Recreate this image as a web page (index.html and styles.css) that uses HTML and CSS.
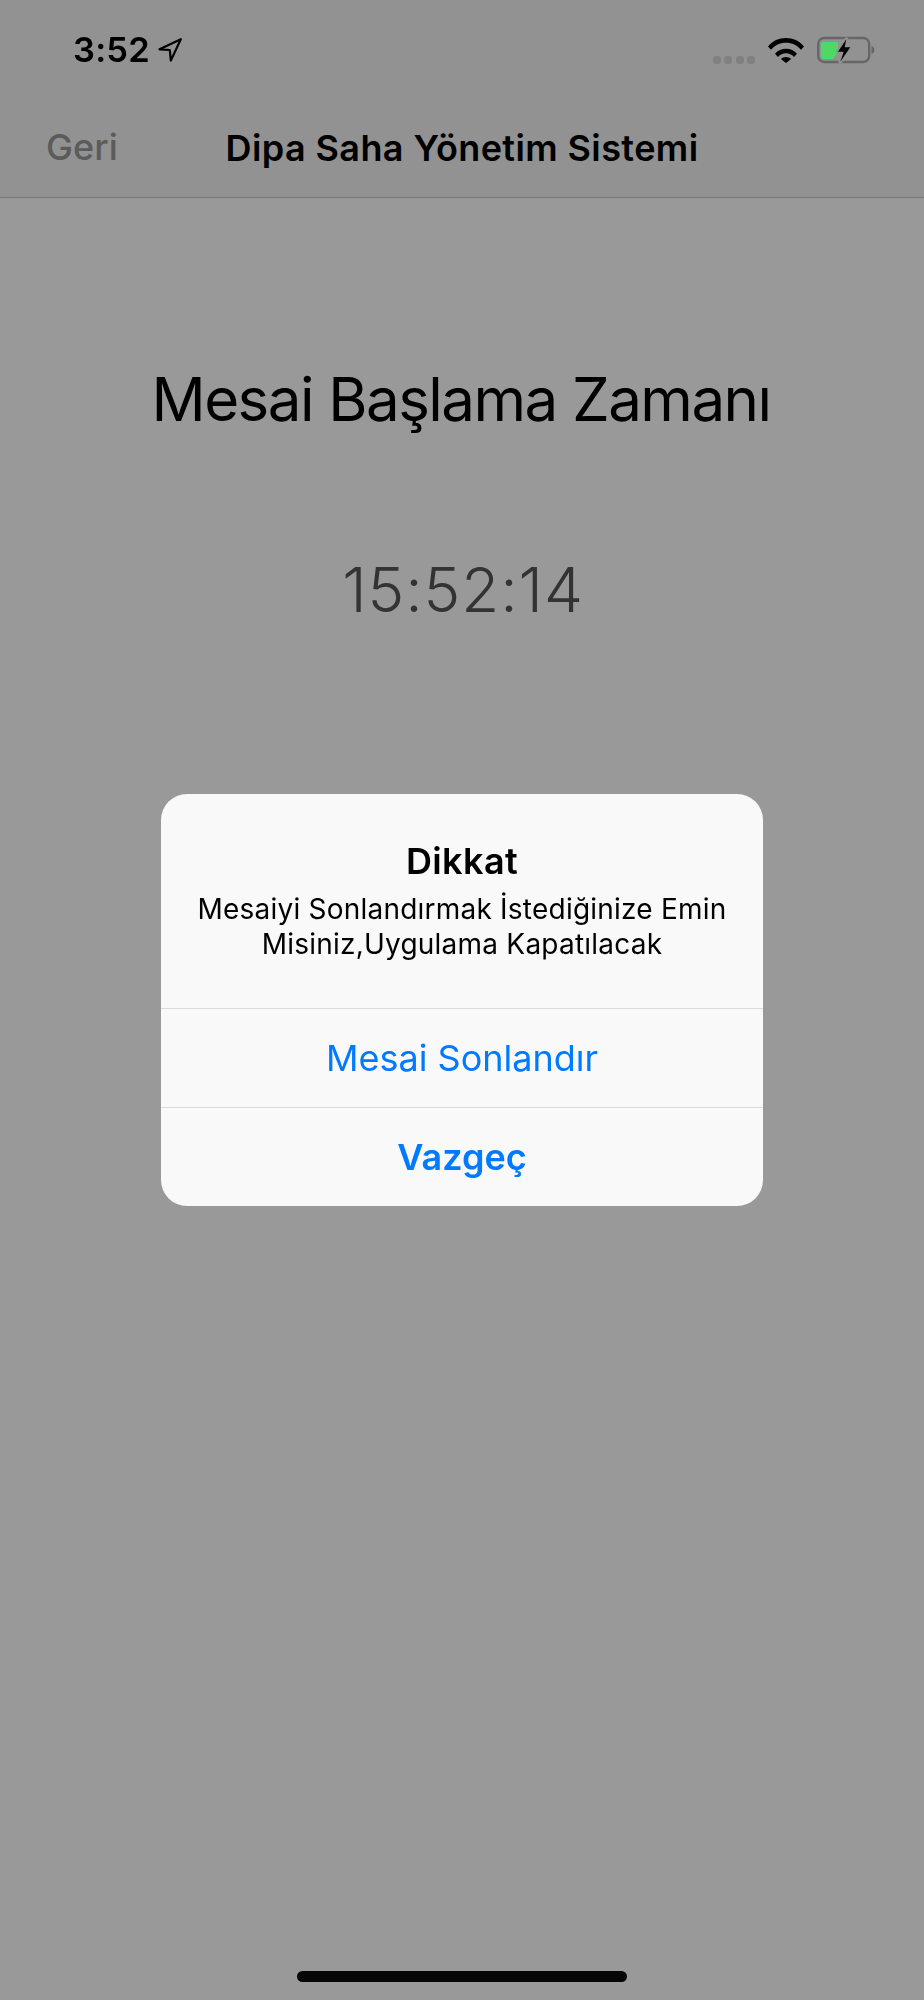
FILE: index.html
```html
<!DOCTYPE html>
<html lang="tr">
<head>
<meta charset="utf-8">
<title>Dipa Saha Yönetim Sistemi</title>
<link rel="stylesheet" href="styles.css">
</head>
<body>
<div class="screen">
  <header class="top">
    <div class="status">
      <div class="status-left">
        <span class="clock">3:52</span>
        <svg class="loc" viewBox="0 0 24 24" width="24" height="24"><path d="M22.800 1.200 1.500 11.300l10.300.7 1 10.600z" fill="none" stroke="#000" stroke-width="2.200" stroke-linejoin="round"/></svg>
      </div>
      <div class="status-right">
        <div class="dots"><i></i><i></i><i></i><i></i></div>
        <svg class="wifi" viewBox="0 0 36 26" width="36" height="26"><path d="M0 9.500C4.600 3.800 11 1 18 1s13.400 2.800 18 8.500l-3 3.300C29.200 8.300 24 5.800 18 5.800S6.800 8.300 3 12.800z"/><path d="M7 16.700c2.900-3.200 6.700-5 11-5s8.100 1.800 11 5l-3 3.200c-2.100-2.300-4.800-3.600-8-3.600s-5.900 1.300-8 3.600z"/><path d="M12.800 21.900c1.400-1.300 3.200-2 5.200-2s3.800.7 5.200 2L18 26z"/></svg>
        <svg class="battery" viewBox="0 0 60 30" width="60" height="30">
          <rect x="2.200" y="3" width="51" height="24" rx="6" fill="none" stroke="#666" stroke-width="2.400"/>
          <path d="M55.500 11c1.800.5 2.800 2 2.800 4s-1 3.500-2.800 4z" fill="#666"/>
          <path d="M7.500 7h14.500v10l-5 7H7.500A2.500 2.500 0 0 1 5 21.500v-12A2.500 2.500 0 0 1 7.500 7z" fill="#4cd964"/>
          <path d="M30.300 4.300 22 16.700h5.700l-3.400 10 10-14.400h-5.600z" fill="#000" stroke="#929292" stroke-width="4" stroke-linejoin="round" paint-order="stroke"/>
        </svg>
      </div>
    </div>
    <nav class="nav">
      <span class="back">Geri</span>
      <h1 class="nav-title">Dipa Saha Yönetim Sistemi</h1>
    </nav>
  </header>
  <main class="content">
    <h2 class="heading">Mesai Başlama Zamanı</h2>
    <p class="time">15:52:14</p>
  </main>
</div>
<div class="scrim"></div>
<section class="alert" role="alertdialog">
  <div class="alert-body">
    <h3 class="alert-title">Dikkat</h3>
    <p class="alert-text">Mesaiyi Sonlandırmak İstediğinize Emin Misiniz,Uygulama Kapatılacak</p>
  </div>
  <button class="alert-btn">Mesai Sonlandır</button>
  <button class="alert-btn alert-btn-bold">Vazgeç</button>
</section>
<div class="home"></div>
</body>
</html>
```
FILE: styles.css
```css
* { box-sizing: border-box; }
html, body { margin: 0; padding: 0; }
body { width: 924px; height: 2000px; font-family: Inter, "Liberation Sans", sans-serif; background: #fff; color: #000; overflow: hidden; }
.screen { height: 2000px; display: flex; flex-direction: column; }
.top { background: #f4f4f4; border-bottom: 1px solid #c8c8c8; height: 198px; }
.status { position: relative; z-index: 2; height: 100px; display: flex; justify-content: space-between; align-items: center; padding: 0 48px 0 73px; }
.status-left { display: flex; align-items: center; gap: 8px; }
.clock { font-size: 34.500px; font-weight: 600; line-height: 40px; letter-spacing: 0.2px; }
.status-right { display: flex; align-items: center; }
.dots { display: flex; gap: 3.500px; margin-top: 19px; margin-right: 13px; }
.dots i { width: 8px; height: 8px; border-radius: 3.500px; background: #808080; }
.wifi { margin-right: 12px; }
.nav { height: 97px; display: flex; align-items: center; justify-content: center; position: relative; }
.back { position: absolute; left: 46px; top: 27px; font-size: 36px; line-height: 40px; font-weight: 500; letter-spacing: 0.1px; color: #989898; }
.nav-title { margin: 0; font-size: 36px; line-height: 40px; font-weight: 600; letter-spacing: 0.400px; position: relative; top: -1px; }
.content { display: flex; flex-direction: column; align-items: center; padding-top: 165px; }
.heading { margin: 0 2px 0 0; font-size: 60px; line-height: 72px; font-weight: 400; letter-spacing: -1.530px; }
.time { margin: 0 0 0 2px; padding-top: 119px; font-size: 62px; line-height: 72px; font-weight: 300; letter-spacing: 0.900px; color: #555; }
.scrim { position: fixed; inset: 0; background: rgba(0,0,0,.4); }
.alert { position: absolute; left: 161px; top: 794px; width: 602px; height: 412px; background: #f9f9f9; border-radius: 26px; overflow: hidden; display: flex; flex-direction: column; }
.alert-body { height: 214px; padding: 45px 30px 0; text-align: center; }
.alert-title { margin: 0; font-size: 36px; line-height: 44px; font-weight: 600; letter-spacing: 0.400px; }
.alert-text { margin: 9px 0 0; font-size: 28px; line-height: 35px; font-weight: 400; letter-spacing: 0.220px; }
.alert-btn { flex: 1; display: block; width: 100%; margin: 0; padding: 0; border: 0; border-top: 1px solid #dcdcdc; background: none; color: #007aff; font-family: inherit; font-size: 36px; font-weight: 400; }
.alert-btn-bold { font-weight: 600; }
.home { position: absolute; left: 297px; top: 1971px; width: 330px; height: 11px; border-radius: 6px; background: #060606; }
```
